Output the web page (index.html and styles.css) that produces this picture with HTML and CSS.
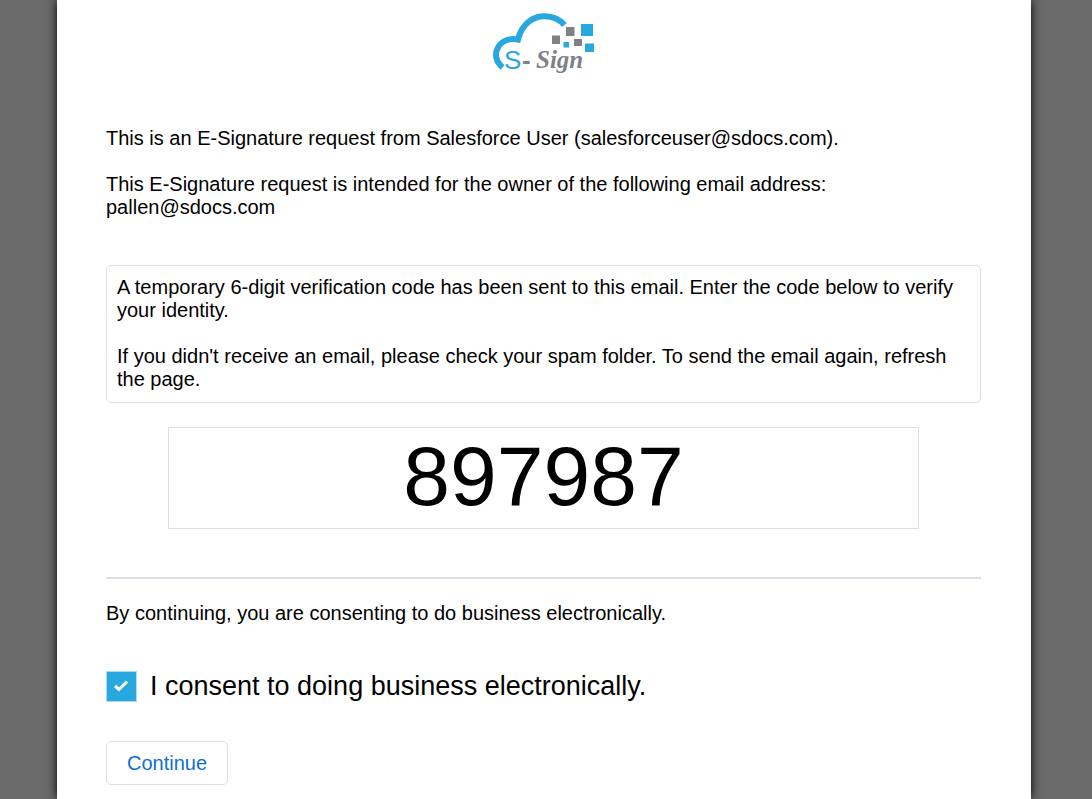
FILE: index.html
```html
<!DOCTYPE html>
<html lang="en">
<head>
    <meta charset="UTF-8">
    <meta name="viewport" content="width=device-width, initial-scale=1.0">
    <title>S-Sign - Verify Your Identity</title>
    <link rel="stylesheet" href="styles.css">
</head>
<body>
    <main class="page">
        <svg class="logo" width="121" height="80" viewBox="-1 0 121 80" role="img" aria-label="S-Sign">
            <path class="cloud" d="M18.5 63.500 C12 57.500 10.500 50.500 13.500 44.500 C16.500 37.500 24.500 33.500 34 35.500 C38 19 50 12 61 12.300 C69 12.500 76 16 80.500 21"/>
            <rect class="blue" x="97" y="20" width="12" height="12"/>
            <rect class="blue" x="101" y="39.500" width="9" height="8.500"/>
            <rect class="blue" x="79.500" y="38" width="5.500" height="5.500"/>
            <rect class="gray" x="82" y="23" width="8.500" height="9"/>
            <rect class="gray" x="68" y="31.500" width="8" height="8.500"/>
            <rect class="gray" x="90" y="35" width="8" height="7"/>
            <text class="logo-s" x="20" y="65">S</text>
            <text class="logo-dash" x="38" y="65">-</text>
            <text class="logo-sign" x="52" y="64">Sign</text>
        </svg>

        <p>This is an E-Signature request from Salesforce User (salesforceuser@sdocs.com).</p>
        <p>This E-Signature request is intended for the owner of the following email address:<br>pallen@sdocs.com</p>

        <div class="notice">
            <p>A temporary 6-digit verification code has been sent to this email. Enter the code below to verify your identity.</p>
            <p>If you didn't receive an email, please check your spam folder. To send the email again, refresh the page.</p>
        </div>

        <form>
            <div class="code-row">
                <input type="text" class="code" id="code" value="897987" maxlength="6" inputmode="numeric" aria-label="Verification code">
            </div>
            <hr>
            <p>By continuing, you are consenting to do business electronically.</p>
            <div class="consent">
                <span class="check">
                    <input type="checkbox" id="consent" checked>
                    <svg class="tick" width="31" height="31" viewBox="0 0 31 31" aria-hidden="true">
                        <path d="M9 15 L13 18.500 L21 10.500"/>
                    </svg>
                </span>
                <label for="consent">I consent to doing business electronically.</label>
            </div>
            <button type="button" class="continue">Continue</button>
        </form>
    </main>
</body>
</html>
```
FILE: styles.css
```css
* {
    box-sizing: border-box;
}
body {
    margin: 0;
    padding: 0 61px 0 57px;
    background-color: #6b6b6b;
    font-family: "Liberation Sans", Arial, sans-serif;
    font-size: 20px;
    line-height: 23px;
    color: #000;
}
.page {
    min-height: 100vh;
    padding: 4px 50px 14px 49px;
    background: white;
    box-shadow: 0 0 10px #000;
}
p {
    margin: 0 0 23px;
}
.logo {
    display: block;
    margin: 0 auto 43px;
}
.cloud {
    fill: none;
    stroke: #29a8e0;
    stroke-width: 6px;
}
.blue {
    fill: #29a8e0;
}
.gray {
    fill: #808184;
}
.logo-s {
    font-size: 26px;
    fill: #29a8e0;
}
.logo-dash {
    font-size: 26px;
    font-weight: bold;
    fill: #808184;
}
.logo-sign {
    font-family: "Liberation Serif", serif;
    font-size: 25px;
    font-style: italic;
    font-weight: bold;
    fill: #808184;
}
.notice {
    margin: 46px 0 24px;
    padding: 10px 10px 11px;
    border: 1px solid #dddfe7;
    border-radius: 5px;
}
.notice p:last-child {
    margin-bottom: 0;
}
.code-row {
    padding: 0 62px;
}
.code {
    display: block;
    width: 100%;
    height: 102px;
    padding: 0 0 4px;
    border: 1px solid #dddfe7;
    font-family: inherit;
    font-size: 84px;
    text-align: center;
    color: #000;
}
hr {
    height: 2px;
    margin: 48px 0 23px;
    border: none;
    background-color: #dddfe7;
}
.consent {
    display: flex;
    align-items: center;
    gap: 13px;
    margin: 46px 0 39px;
    font-size: 27px;
    line-height: 31px;
}
.check {
    position: relative;
    width: 31px;
    height: 31px;
}
.check input {
    display: block;
    width: 31px;
    height: 31px;
    margin: 0;
    appearance: none;
    border: 1px solid #a9dcf3;
    background: white;
}
.check input:checked {
    background: #29a8e0;
}
.tick {
    position: absolute;
    top: 0;
    left: 0;
    fill: none;
    stroke: white;
    stroke-width: 3px;
    pointer-events: none;
}
.continue {
    display: block;
    height: 44px;
    padding: 0 20px;
    border: 1px solid #dddfe7;
    border-radius: 5px;
    background: white;
    font-family: inherit;
    font-size: 20px;
    color: #0f6fce;
    cursor: pointer;
}
```
